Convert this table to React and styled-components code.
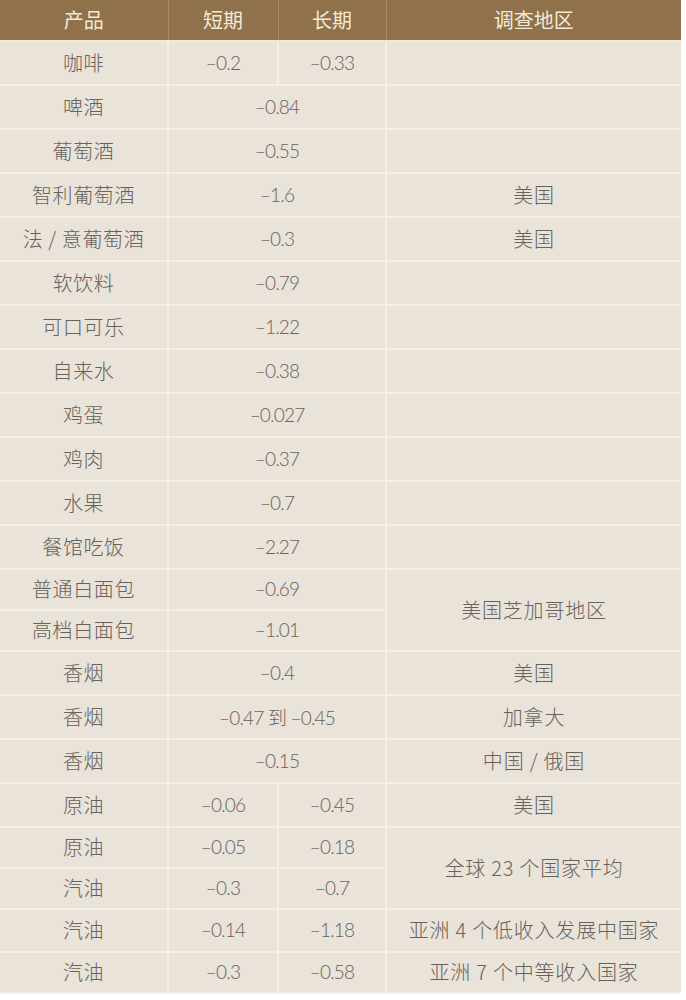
import styled, { createGlobalStyle } from "styled-components";

const HeaderBg = "#8f714b";
const BodyBg = "#e9e3d9";
const LineColor = "#f5f0e6";
const TextColor = "#67625b";

const rows = [
  { name: "咖啡", short: "–0.2", long: "–0.33", region: "" },
  { name: "啤酒", both: "–0.84", region: "" },
  { name: "葡萄酒", both: "–0.55", region: "" },
  { name: "智利葡萄酒", both: "–1.6", region: "美国" },
  { name: "法 / 意葡萄酒", both: "–0.3", region: "美国" },
  { name: "软饮料", both: "–0.79", region: "" },
  { name: "可口可乐", both: "–1.22", region: "" },
  { name: "自来水", both: "–0.38", region: "" },
  { name: "鸡蛋", both: "–0.027", region: "" },
  { name: "鸡肉", both: "–0.37", region: "" },
  { name: "水果", both: "–0.7", region: "" },
  { name: "餐馆吃饭", both: "–2.27", region: "" },
  { name: "普通白面包", both: "–0.69", region: "美国芝加哥地区", span: 2, h: 41 },
  { name: "高档白面包", both: "–1.01", h: 41 },
  { name: "香烟", both: "–0.4", region: "美国" },
  { name: "香烟", both: "–0.47 到 –0.45", region: "加拿大" },
  { name: "香烟", both: "–0.15", region: "中国 / 俄国" },
  { name: "原油", short: "–0.06", long: "–0.45", region: "美国" },
  { name: "原油", short: "–0.05", long: "–0.18", region: "全球 23 个国家平均", span: 2, h: 41 },
  { name: "汽油", short: "–0.3", long: "–0.7", h: 41 },
  { name: "汽油", short: "–0.14", long: "–1.18", region: "亚洲 4 个低收入发展中国家", h: 43 },
  { name: "汽油", short: "–0.3", long: "–0.58", region: "亚洲 7 个中等收入国家", h: 41 },
];

function App() {
  return (
    <>
      <GlobalStyle />
      <Table>
        <colgroup>
          <col style={{ width: 168 }} />
          <col style={{ width: 110 }} />
          <col style={{ width: 108 }} />
          <col style={{ width: 295 }} />
        </colgroup>
        <thead>
          <HeadRow>
            <Th>产品</Th>
            <Th>短期</Th>
            <Th>长期</Th>
            <Th>调查地区</Th>
          </HeadRow>
        </thead>
        <tbody>
          {rows.map((r, i) => (
            <Row key={i} $h={r.h || 44}>
              <NameCell>{r.name}</NameCell>
              {r.both ? (
                <NumCell colSpan={2}>{r.both}</NumCell>
              ) : (
                <>
                  <NumCell>{r.short}</NumCell>
                  <NumCell>{r.long}</NumCell>
                </>
              )}
              {r.region !== undefined && (
                <RegionCell rowSpan={r.span || 1}>{r.region}</RegionCell>
              )}
            </Row>
          ))}
        </tbody>
      </Table>
    </>
  );
}

const GlobalStyle = createGlobalStyle`
  body {
    margin: 0;
    background: #fff;
    font-family: "Noto Sans CJK SC", "Noto Sans", sans-serif;
  }
`;

const Table = styled.table`
  width: 681px;
  table-layout: fixed;
  border-collapse: collapse;
  background: ${BodyBg};
  color: ${TextColor};
`;

const HeadRow = styled.tr`
  height: 41px;
  background: ${HeaderBg};
`;

const Th = styled.th`
  padding: 0 0 2px;
  font-weight: 400;
  font-size: 20px;
  color: #f4ead6;
  text-align: center;
  border-left: 1px solid #a68a63;
  border-bottom: 2px solid #f1e9d8;
  &:first-child {
    border-left: none;
  }
`;

const Row = styled.tr`
  height: ${(p) => p.$h}px;
`;

const Cell = styled.td`
  padding: 0 0 2px;
  text-align: center;
  vertical-align: middle;
  border: 2px solid ${LineColor};
  &:first-child {
    border-left: none;
  }
  &:last-child {
    border-right: none;
  }
`;

const NameCell = styled(Cell)`
  font-size: 20px;
  font-weight: 300;
  letter-spacing: 0.6px;
`;

const NumCell = styled(Cell)`
  font-family: Lato, "Noto Sans CJK SC", sans-serif;
  font-size: 19px;
  font-weight: 300;
  letter-spacing: -0.8px;
`;

const RegionCell = styled(Cell)`
  font-size: 20px;
  font-weight: 300;
  letter-spacing: 0.8px;
  border-right: none;
`;

export default App;
